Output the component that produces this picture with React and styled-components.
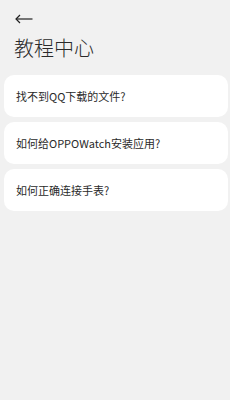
import React from 'react';
import styled, { createGlobalStyle } from 'styled-components';

const GlobalStyle = createGlobalStyle`
    html, body {
        margin: 0;
        padding: 0;
        background-color: #f1f1f1;
        font-family: "Noto Sans CJK SC", "Noto Sans", sans-serif;
    }
`

const Page = styled.div`
    width: 230px;
    min-height: 400px;
    background-color: #f1f1f1;
    display: flex;
    flex-direction: column;
`

const Header = styled.div`
    display: flex;
    flex-direction: column;
    padding: 12px 14px 0 14px;
`

const BackBtn = styled.button`
    border: none;
    background: none;
    padding: 0;
    margin-left: 1px;
    width: 20px;
    height: 14px;
    display: flex;
    align-items: center;
    color: #222;
`

const Title = styled.h1`
    margin: 8px 0 0 0;
    font-size: 20px;
    font-weight: 300;
    line-height: 28px;
    color: #2a2a2a;
`

const List = styled.div`
    display: flex;
    flex-direction: column;
    gap: 5px;
    padding: 13px 2px 0 4px;
`

const Card = styled.div`
    height: 42px;
    border-radius: 10px;
    background-color: #ffffff;
    display: flex;
    align-items: center;
    padding: 0 12px;
    font-size: 11px;
    font-weight: 400;
    color: #2a2a2a;
`

const questions = [
    '找不到QQ下载的文件?',
    '如何给OPPOWatch安装应用?',
    '如何正确连接手表?',
]

const App = () => {
    return (
        <>
            <GlobalStyle />
            <Page>
                <Header>
                    <BackBtn>
                        <svg width="18" height="10" viewBox="0 0 18 10" fill="none" stroke="currentColor" strokeWidth="1.2">
                            <path d="M1 5 H17.5" />
                            <path d="M5 1 L1 5 L5 9" />
                        </svg>
                    </BackBtn>
                    <Title>教程中心</Title>
                </Header>
                <List>
                    {questions.map(q => <Card key={q}>{q}</Card>)}
                </List>
            </Page>
        </>
    )
}

export default App;
